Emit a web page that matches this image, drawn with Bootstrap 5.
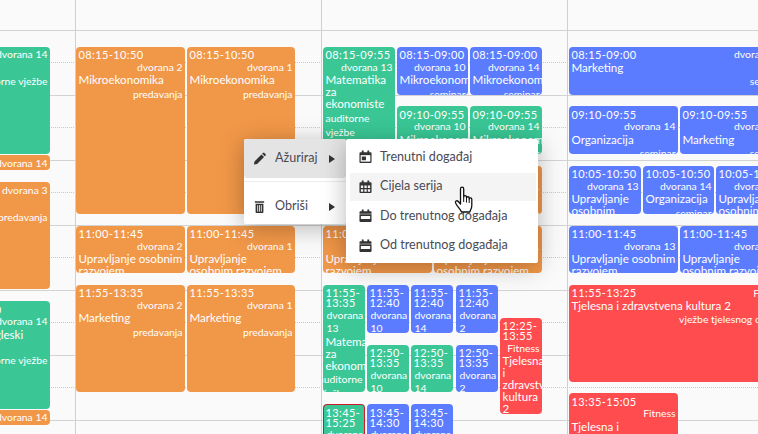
<!DOCTYPE html>
<html lang="en">
<head>
<meta charset="UTF-8">
<title>Kalendar</title>
<link href="https://cdn.jsdelivr.net/npm/bootstrap@5.3.0/dist/css/bootstrap.min.css" rel="stylesheet">
<style>
  html, body { height: 100%; overflow: hidden; }
  body { background: #fafafa; font-family: Lato, "Noto Sans", sans-serif; color: #3f4254; }
  .cal-canvas { position: relative; width: 758px; height: 434px; overflow: hidden; }
  .hour-line { position: absolute; left: 0; right: 0; height: 0; border-top: 1px solid #d3d3d3; }
  .half-line { position: absolute; left: 0; right: 0; height: 0; border-top: 1px dotted #c8c8c8; }
  .day-line { position: absolute; top: 0; bottom: 0; width: 1px; background: #cfcfcf; }
  .cal-ev { position: absolute; border-radius: 4px; color: #fff; overflow: hidden; padding: 3.3px 2.5px 0; font-size: 10.4px; }
  .ev-head { display: flex; flex-wrap: wrap; align-items: flex-start; column-gap: 10px; row-gap: 2.4px; }
  .t-time { font-size: 11px; letter-spacing: .4px; line-height: 10px; }
  .t-room { line-height: 13.3px; margin-top: -1.7px; margin-left: auto; padding-left: 1px; }
  .t-name { font-size: 11.6px; line-height: 12px; }
  .t-type { display: flex; justify-content: flex-end; line-height: 14px; margin-top: .5px; }
  .ev-o { background: #f19748; }
  .ev-g { background: #3ac795; }
  .ev-b { background: #5b7cff; }
  .ev-r { background: #ff4c4f; }
  .ev-sel { outline: 1px solid #d3182c; outline-offset: -1px; }
  .ctx-menu { position: absolute; top: 139px; background: #fff; border-radius: 2px; box-shadow: 0 4px 24px rgba(0,0,0,.28); font-size: 12.6px; }
  .ctx-main { left: 244px; width: 102px; height: 85px; }
  .ctx-sub { left: 346px; width: 192px; height: 124px; padding-top: 4px; }
  .ctx-row { height: 39px; color: #4a4a55; padding: 0 9px; }
  .ctx-row.on { background: #e4e4e4; border-radius: 3px; }
  .ctx-sep { border-top: 1px solid #ececec; margin: 3px 0 5px; }
  .ctx-caret { width: 0; height: 0; border-left: 6px solid #333; border-top: 4px solid transparent; border-bottom: 4px solid transparent; margin-left: auto; margin-right: 2px; }
  .sub-row { height: 28px; margin: 0 2px 1.5px 4px; padding-left: 9px; color: #4a4a55; }
  .sub-row.on { background: #f4f4f4; }
  .ctx-ico { width: 13px; height: 14px; flex: none; margin-right: 8px; }
  .ctx-row .ctx-ico { margin-right: 9px; }
  .ptr { position: absolute; left: 454px; top: 186px; width: 21px; height: 28px; }
</style>
</head>
<body>
<div class="cal-canvas" id="cal">
  <div class="ctx-menu ctx-main">
    <div class="ctx-row on d-flex align-items-center">
      <svg class="ctx-ico" viewBox="0 0 14 14"><path fill="#333" d="M1 13l.6-3.400 7.500-7.500 2.800 2.800-7.500 7.500zM9.900 1.300l.9-.9c.4-.3.9-.3 1.200 0l1.600 1.600c.3.3.3.8 0 1.200l-.9.9z"/></svg>
      <span>Ažuriraj</span><i class="ctx-caret"></i>
    </div>
    <div class="ctx-sep"></div>
    <div class="ctx-row d-flex align-items-center">
      <svg class="ctx-ico" viewBox="0 0 14 14"><path fill="#333" d="M2 .8h10v1.600H2zM2.800 3.400h8.400v9.200c0 .5-.4.9-.9.9H3.700c-.5 0-.9-.4-.9-.9z"/><path stroke="#fff" stroke-width=".9" d="M5 5v7M7 5v7M9 5v7"/></svg>
      <span>Obriši</span><i class="ctx-caret"></i>
    </div>
  </div>
  <div class="ctx-menu ctx-sub">
    <div class="sub-row d-flex align-items-center">
      <svg class="ctx-ico" viewBox="0 0 14 14"><path fill="#333" d="M3 0h2v2h4V0h2v2h1.500c.6 0 1 .4 1 1v9.500c0 .6-.4 1-1 1h-11c-.6 0-1-.4-1-1V3c0-.6.4-1 1-1H3z"/><path fill="#fff" d="M1.800 5h10.400v7H1.800z"/><path fill="#333" d="M3 6.500h4.500v4H3z"/></svg>
      <span>Trenutni događaj</span>
    </div>
    <div class="sub-row on d-flex align-items-center">
      <svg class="ctx-ico" viewBox="0 0 14 14"><path fill="#333" d="M3 0h2v2h4V0h2v2h1.500c.6 0 1 .4 1 1v9.500c0 .6-.4 1-1 1h-11c-.6 0-1-.4-1-1V3c0-.6.4-1 1-1H3z"/><path fill="#f4f4f4" d="M2 5.500h2.500v2.500H2zM5.800 5.500h2.500v2.500H5.800zM9.500 5.500H12v2.500H9.500zM2 9.300h2.500v2.700H2zM5.800 9.300h2.500v2.700H5.800zM9.500 9.300H12v2.700H9.500z"/></svg>
      <span>Cijela serija</span>
    </div>
    <div class="sub-row d-flex align-items-center">
      <svg class="ctx-ico" viewBox="0 0 14 14"><path fill="#333" d="M3 0h2v2h4V0h2v2h1.500c.6 0 1 .4 1 1v9.500c0 .6-.4 1-1 1h-11c-.6 0-1-.4-1-1V3c0-.6.4-1 1-1H3z"/><path fill="#fff" d="M0 4.500h14v.7H0zM2 7h10v3.200H2z"/></svg>
      <span>Do trenutnog događaja</span>
    </div>
    <div class="sub-row d-flex align-items-center">
      <svg class="ctx-ico" viewBox="0 0 14 14"><path fill="#333" d="M3 0h2v2h4V0h2v2h1.500c.6 0 1 .4 1 1v9.500c0 .6-.4 1-1 1h-11c-.6 0-1-.4-1-1V3c0-.6.4-1 1-1H3z"/><path fill="#fff" d="M0 4.500h14v.7H0zM2 7h10v3.200H2z"/></svg>
      <span>Od trenutnog događaja</span>
    </div>
  </div>
  <svg class="ptr" viewBox="0 0 21 28"><path fill="#fff" stroke="#111" stroke-width="1.300" stroke-linejoin="round" d="M6.500 3c0-2.400 3.200-2.400 3.200 0v8c0-1.800 2.800-1.800 2.800 0v1c0-1.700 2.700-1.700 2.700 0v1c0-1.500 2.600-1.500 2.600.2v6.300c0 3-1.200 4-2 6.500H7.500C6.500 23 4 21.500 1.800 17.500c-1.200-2.300 1-3.500 2.500-2l2.200 2.500z"/><path stroke="#111" d="M9.700 11v5M12.500 12v4.500M15.200 13v4"/></svg>
</div>
<script>
  // 65px per hour, 08:00 sits just under the first hour line
  const cal = document.getElementById("cal");
  const menu = cal.firstElementChild;
  function y(t) { const p = t.split(":"); return 30.5 + (p[0] * 60 + +p[1] - 480) * 65 / 60; }
  function addLine(cls, top) {
    const d = document.createElement("div");
    d.className = cls;
    d.style.top = top + "px";
    cal.insertBefore(d, menu);
  }
  for (let i = 0; i < 7; i++) {
    addLine("hour-line", 30 + i * 65);
    addLine("half-line", 62 + i * 65);
  }
  [75, 321, 567].forEach(function (x) {
    const d = document.createElement("div");
    d.className = "day-line";
    d.style.left = x + "px";
    cal.insertBefore(d, menu);
  });

  const pred = "predavanja", sem = "seminar", aud = "auditorne vježbe";
  const ekon = "Matematika za ekonomiste", upr = "Upravljanje osobnim razvojem", mik = "Mikroekonomika", tz = "Tjelesna i zdravstvena kultura 2";
  // [colour, left, right, from, to, room, name, type]
  const events = [
    ["g", -122, 50, "08:15", "09:55", "dvorana 14", "Statistika", aud],
    ["o", -122, 50, "09:55", "10:10", "dvorana 14", "", ""],
    ["o", -122, 50, "10:20", "12:00", "dvorana 3", "Marketing", pred],
    ["g", -66, 50, "12:10", "13:50", "dvorana 14", "Poslovni engleski<br>jezik", aud],
    ["o", -122, 50, "13:50", "14:05", "dvorana 14", "", ""],

    ["o", 76, 185, "08:15", "10:50", "dvorana 2", mik, pred],
    ["o", 187, 295, "08:15", "10:50", "dvorana 1", mik, pred],
    ["o", 76, 185, "11:00", "11:45", "dvorana 2", upr, pred],
    ["o", 187, 295, "11:00", "11:45", "dvorana 1", upr, pred],
    ["o", 76, 185, "11:55", "13:35", "dvorana 2", "Marketing", pred],
    ["o", 187, 295, "11:55", "13:35", "dvorana 1", "Marketing", pred],

    ["g", 323, 395, "08:15", "09:55", "dvorana 13", ekon, aud],
    ["b", 397, 468, "08:15", "09:00", "dvorana 10", mik, sem],
    ["b", 470, 542, "08:15", "09:00", "dvorana 14", mik, sem],
    ["g", 397, 468, "09:10", "09:55", "dvorana 10", mik, sem],
    ["g", 470, 542, "09:10", "09:55", "dvorana 14", mik, sem],
    ["o", 323, 432, "10:05", "10:50", "dvorana 2", mik, pred],
    ["o", 434, 542, "10:05", "10:50", "dvorana 1", mik, pred],
    ["o", 323, 432, "11:00", "11:45", "dvorana 2", upr, pred],
    ["o", 434, 542, "11:00", "11:45", "dvorana 1", upr, pred],
    ["g", 323, 365, "11:55", "13:35", "dvorana 13", ekon, aud],
    ["b", 367, 409, "11:55", "12:40", "dvorana 10", mik, sem],
    ["b", 411, 453, "11:55", "12:40", "dvorana 14", mik, sem],
    ["b", 456, 498, "11:55", "12:40", "dvorana 2", mik, sem],
    ["g", 367, 409, "12:50", "13:35", "dvorana 10", mik, sem],
    ["g", 411, 453, "12:50", "13:35", "dvorana 14", mik, sem],
    ["b", 456, 498, "12:50", "13:35", "dvorana 2", mik, sem],
    ["r", 500, 542, "12:25", "13:55", "Fitness", tz, ""],
    ["g sel", 323, 365, "13:45", "15:25", "dvorana 13", ekon, aud],
    ["b", 367, 409, "13:45", "14:30", "dvorana 10", mik, sem],
    ["b", 411, 453, "13:45", "14:30", "dvorana 14", mik, sem],

    ["b", 569, 788, "08:15", "09:00", "dvorana 10", "Marketing", sem],
    ["b", 569, 678, "09:10", "09:55", "dvorana 14", "Organizacija", sem],
    ["b", 680, 788, "09:10", "09:55", "dvorana 10", "Marketing", sem],
    ["b", 569, 641, "10:05", "10:50", "dvorana 13", "Upravljanje osobnim", sem],
    ["b", 643, 714, "10:05", "10:50", "dvorana 14", "Organizacija", sem],
    ["b", 716, 788, "10:05", "10:50", "dvorana 10", "Upravljanje osobnim", sem],
    ["b", 569, 678, "11:00", "11:45", "dvorana 13", upr, sem],
    ["b", 680, 788, "11:00", "11:45", "dvorana 10", upr, sem],
    ["r", 569, 788, "11:55", "13:25", "Fitness", tz, "vježbe tjelesnog odgoja"],
    ["r", 569, 678, "13:35", "15:05", "Fitness", tz, ""]
  ];

  events.forEach(function (e) {
    const d = document.createElement("div");
    const cls = e[0].split(" ");
    d.className = "cal-ev ev-" + cls[0] + (cls[1] ? " ev-sel" : "");
    d.style.left = e[1] + "px";
    d.style.width = (e[2] - e[1]) + "px";
    d.style.top = y(e[3]) + "px";
    d.style.height = (y(e[4]) - y(e[3]) - 1) + "px";
    d.innerHTML = "<div class='ev-head'><div class='t-time'>" + e[3] + "-" + e[4] + "</div>" +
      "<div class='t-room'>" + e[5] + "</div></div>" +
      "<div class='t-name'>" + e[6] + "</div>" +
      "<div class='t-type'><div>" + e[7] + "</div></div>";
    cal.insertBefore(d, menu);
  });
</script>
<script src="https://cdn.jsdelivr.net/npm/bootstrap@5.3.0/dist/js/bootstrap.bundle.min.js"></script>
</body>
</html>
